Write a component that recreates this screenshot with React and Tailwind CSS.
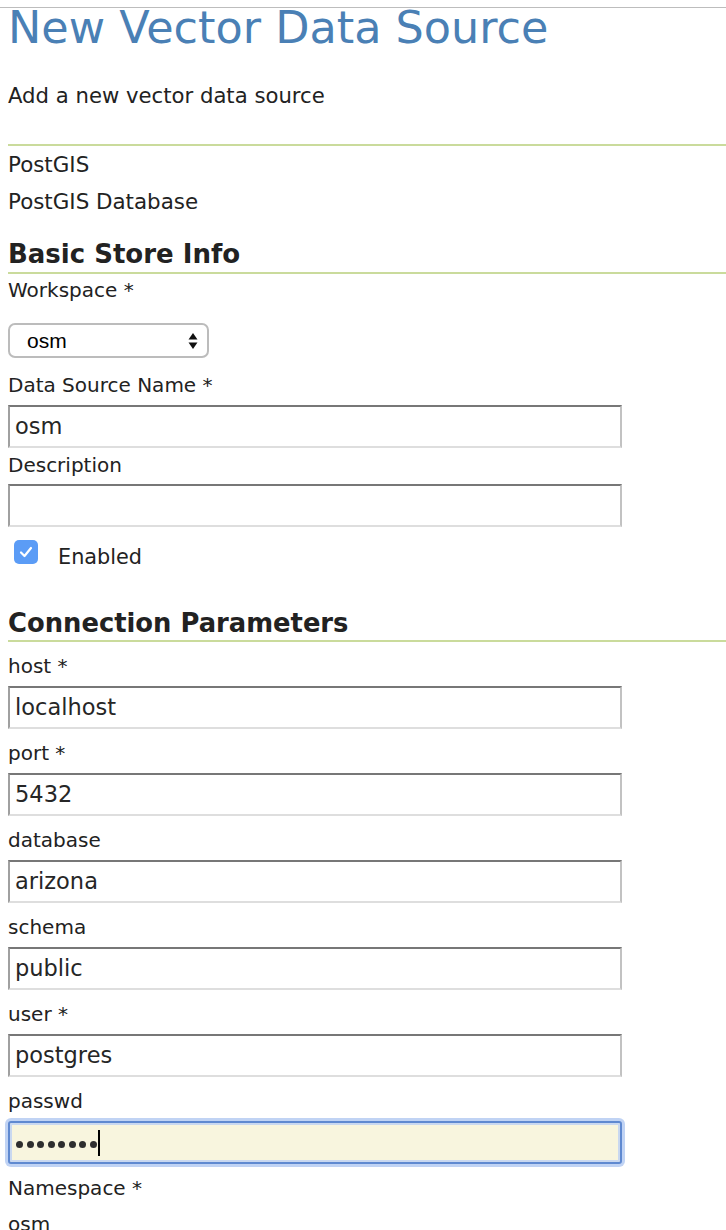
import React from "react";

const FONT = { fontFamily: '"DejaVu Sans", Verdana, sans-serif' };

function TextInput({ value }) {
  return (
    <div className="mt-[6px] h-[43px] w-[614px] border-2 border-t-[#777777] border-l-[#a0a0a0] border-r-[#c2c2c2] border-b-[#dedede] bg-white pl-[5px] text-[22.5px] leading-[39px] text-[#262626]">
      {value}
    </div>
  );
}

function Label({ children, className }) {
  return <div className={"h-[28px] text-[20px] leading-[28px] text-[#222] " + className}>{children}</div>;
}

function Field({ label, value }) {
  return (
    <div>
      <Label className="mt-[10px]">{label}</Label>
      <TextInput value={value} />
    </div>
  );
}

function GreenLine({ className }) {
  return <div className={"h-[2px] bg-[#cadb9c] " + className} />;
}

export default function App() {
  const conn = [
    ["host *", "localhost"],
    ["port *", "5432"],
    ["database", "arizona"],
    ["schema", "public"],
    ["user *", "postgres"],
  ];
  const dots = [0, 1, 2, 3, 4, 5, 6, 7];
  return (
    <div className="h-[1230px] w-[726px] overflow-hidden bg-white text-[#222]" style={FONT}>
      <div className="pt-[7px]">
        <div className="h-px bg-[#bdbdbd]" />
      </div>
      <div className="pl-[8px]">
        <h1 className="h-[40px] whitespace-nowrap text-[44.5px] leading-[40px] text-[#4a80b5]">New Vector Data Source</h1>
        <p className="mt-[34px] h-[28px] text-[21.2px] leading-[28px]">Add a new vector data source</p>
        <GreenLine className="mt-[34px]" />
        <div className="mt-[5px] h-[28px] text-[21.4px] leading-[28px]">PostGIS</div>
        <div className="mt-[9px] h-[28px] text-[21.4px] leading-[28px]">PostGIS Database</div>
        <h2 className="mt-[21px] h-[34px] text-[26px] font-bold leading-[34px] text-[#222]">Basic Store Info</h2>
        <GreenLine className="mt-[1px]" />
        <Label className="mt-[2px]">Workspace *</Label>
        <div
          className="mt-[19px] flex h-[35px] w-[201px] items-center justify-between rounded-[7px] border-2 border-[#bcbcbc] bg-white pl-[17px] pr-[8px] text-[21px] text-black"
          style={{ fontFamily: '"Liberation Sans", Arial, sans-serif' }}
        >
          <span>osm</span>
          <svg width="10" height="18" viewBox="0 0 10 18" className="mr-[1px]">
            <path d="M5 1 L9.5 7.5 L0.5 7.5 Z" fill="#111" />
            <path d="M5 17 L9.5 10.5 L0.5 10.5 Z" fill="#111" />
          </svg>
        </div>
        <Label className="mt-[13px]">Data Source Name *</Label>
        <TextInput value="osm" />
        <Label className="mt-[3px]">Description</Label>
        <div className="mt-[5px] h-[43px] w-[614px] border-2 border-t-[#777777] border-l-[#a0a0a0] border-r-[#c2c2c2] border-b-[#dedede] bg-white" />
        <div className="mt-[13px] flex items-start">
          <div className="ml-[6px] flex h-[24px] w-[24px] items-center justify-center rounded-[5px] bg-[#5b9cf6]">
            <svg width="14" height="12" viewBox="0 0 14 12">
              <path d="M2 6.5 L5.5 10 L12 2" stroke="white" strokeWidth="2.2" fill="none" strokeLinecap="round" strokeLinejoin="round" />
            </svg>
          </div>
          <span className="ml-[20px] mt-[3px] h-[28px] text-[20.8px] leading-[28px]">Enabled</span>
        </div>
        <h2 className="mt-[35px] h-[34px] text-[25.8px] font-bold leading-[34px] text-[#222]">Connection Parameters</h2>
        <GreenLine className="mt-0" />
        {conn.map(([l, v]) => (
          <Field key={l} label={l} value={v} />
        ))}
        <Label className="mt-[10px]">passwd</Label>
        <div className="mt-[6px] flex h-[43px] w-[614px] items-center rounded-[3px] border-2 border-[#5f89d0] bg-[#f8f5de] pl-[6px] shadow-[0_0_0_3px_rgba(140,175,235,0.55),inset_0_0_0_2px_#c9d8f0]">
          <div className="mt-[3px] flex items-center gap-[3.5px]">
            {dots.map((d) => (
              <span key={d} className="inline-block h-[7px] w-[7px] rounded-full bg-[#2e2e2e]" />
            ))}
          </div>
          <span className="ml-[1px] inline-block h-[26px] w-[2px] bg-black" />
        </div>
        <Label className="mt-[10px]">Namespace *</Label>
        <Label className="mt-[8px]">osm</Label>
      </div>
    </div>
  );
}
